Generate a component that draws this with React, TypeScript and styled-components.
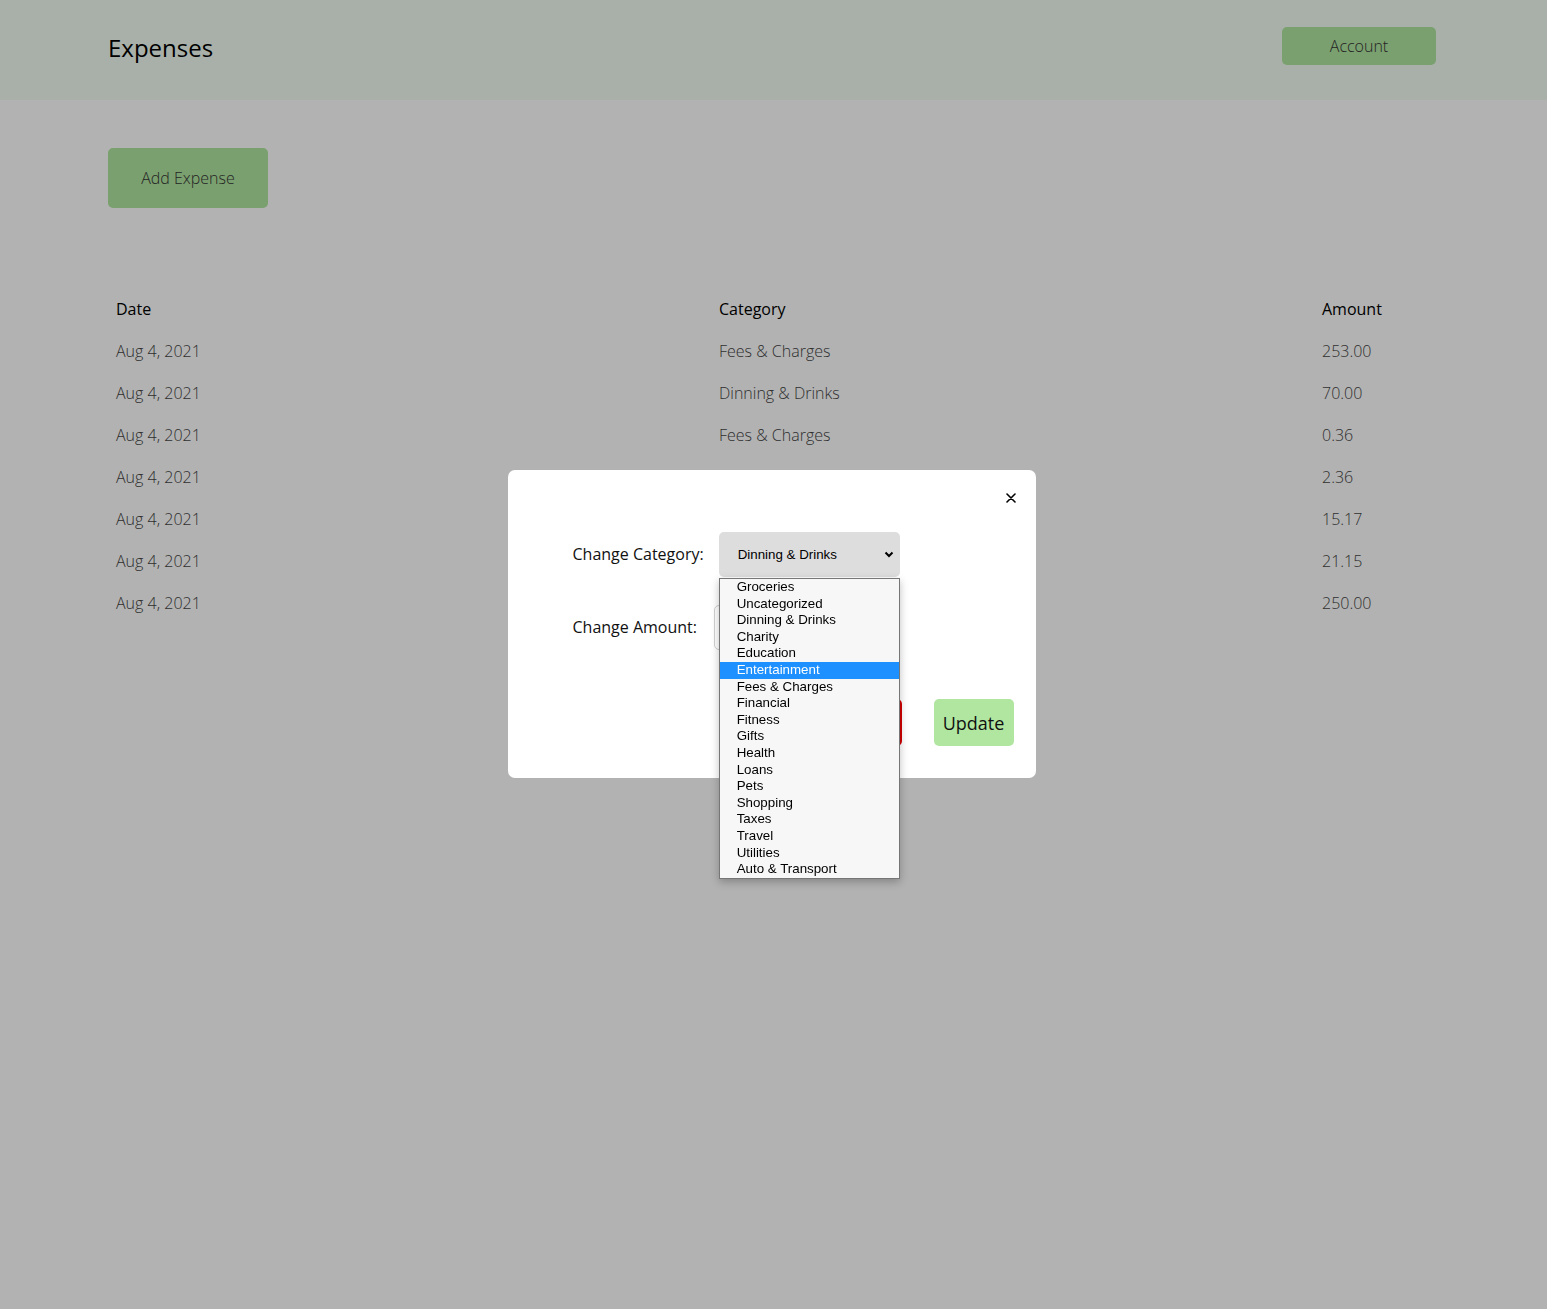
import React, { FC } from "react";
import styled, { createGlobalStyle } from "styled-components";

const GlobalStyle = createGlobalStyle`
  body {
    margin: 0;
    background: #ffffff;
    font-family: "Open Sans", "Liberation Sans", sans-serif;
    color: #111;
  }
`;

const Header = styled.header`
  display: flex;
  align-items: flex-start;
  justify-content: space-between;
  height: 100px;
  box-sizing: border-box;
  padding: 27px 111px 0 108px;
  background: #f2fdf2;
`;

const Title = styled.h1`
  margin: 0;
  font-size: 24px;
  font-weight: 400;
  line-height: 42px;
  color: #000;
`;

const GreenButton = styled.button<{ $w: number; $h: number }>`
  width: ${(p) => p.$w}px;
  height: ${(p) => p.$h}px;
  border: none;
  border-radius: 5px;
  background: #b0e6a0;
  font-family: "Open Sans", sans-serif;
  font-size: 16px;
  font-weight: 300;
  color: #333;
  cursor: pointer;
`;

const Main = styled.main`
  padding: 48px 111px 0 108px;
`;

const Table = styled.div`
  display: grid;
  grid-template-columns: 603px 603px 1fr;
  margin-top: 80px;
`;

const Cell = styled.div<{ $head?: boolean }>`
  padding-left: 8px;
  height: 42px;
  line-height: 42px;
  font-size: 16px;
  font-weight: ${(p) => (p.$head ? 400 : 300)};
  color: ${(p) => (p.$head ? "#000" : "#444")};
`;

const Overlay = styled.div`
  position: fixed;
  inset: 0;
  background: rgba(0, 0, 0, 0.3);
  display: flex;
  justify-content: center;
  align-items: flex-start;
  padding: 470px 4px 0 0;
`;

const Modal = styled.div`
  position: relative;
  width: 528px;
  height: 308px;
  box-sizing: border-box;
  padding: 62px 22px 32px 65px;
  background: #fff;
  border-radius: 7px;
  display: flex;
  flex-direction: column;
`;

const Close = styled.button`
  position: absolute;
  top: 18px;
  right: 15px;
  width: 20px;
  height: 20px;
  padding: 0;
  border: none;
  background: none;
  display: flex;
  align-items: center;
  justify-content: center;
  cursor: pointer;
`;

const FormRow = styled.div<{ $gap: number }>`
  display: flex;
  align-items: center;
  gap: ${(p) => p.$gap}px;
  margin-bottom: 28px;
`;

const Label = styled.label`
  font-size: 16px;
  line-height: 22px;
  padding-bottom: 2px;
  color: #111;
`;

const SelectWrap = styled.div`
  position: relative;
`;

const SelectBox = styled.div`
  width: 181px;
  height: 45px;
  box-sizing: border-box;
  padding: 0 6px 0 19px;
  border-radius: 5px;
  background: #dddddd;
  display: flex;
  align-items: center;
  justify-content: space-between;
  font-family: Arial, "Liberation Sans", sans-serif;
  font-size: 13.33px;
  color: #000;
`;

const Dropdown = styled.ul`
  position: absolute;
  top: 46px;
  left: 0;
  z-index: 2;
  width: 181px;
  box-sizing: border-box;
  margin: 0;
  padding: 0;
  list-style: none;
  background: #f7f7f7;
  border: 1px solid #767676;
  box-shadow: 0 3px 8px rgba(0, 0, 0, 0.25);
`;

const Option = styled.li<{ $active?: boolean }>`
  height: 16.6px;
  line-height: 16.6px;
  padding-left: 17px;
  font-family: Arial, "Liberation Sans", sans-serif;
  font-size: 13.33px;
  color: ${(p) => (p.$active ? "#fff" : "#000")};
  background: ${(p) => (p.$active ? "#1e90ff" : "transparent")};
  white-space: nowrap;
`;

const AmountInput = styled.input`
  width: 186px;
  height: 45px;
  box-sizing: border-box;
  border: 1px solid #cfcfcf;
  border-radius: 5px;
  padding: 0 12px;
  font-size: 16px;
`;

const Actions = styled.div`
  margin-top: auto;
  display: flex;
  justify-content: flex-end;
  gap: 32px;
`;

const ActionButton = styled.button<{ $danger?: boolean }>`
  width: ${(p) => (p.$danger ? 96 : 80)}px;
  height: 47px;
  padding: 0;
  border: none;
  border-radius: 5px;
  background: ${(p) => (p.$danger ? "#d40000" : "#b0e6a0")};
  color: ${(p) => (p.$danger ? "#fff" : "#111")};
  font-family: "Open Sans", sans-serif;
  font-size: 18px;
  cursor: pointer;
`;

const rows = [
  ["Aug 4, 2021", "Fees & Charges", "253.00"],
  ["Aug 4, 2021", "Dinning & Drinks", "70.00"],
  ["Aug 4, 2021", "Fees & Charges", "0.36"],
  ["Aug 4, 2021", "Shopping", "2.36"],
  ["Aug 4, 2021", "Groceries", "15.17"],
  ["Aug 4, 2021", "Gifts", "21.15"],
  ["Aug 4, 2021", "Travel", "250.00"],
];

const categories = [
  "Groceries",
  "Uncategorized",
  "Dinning & Drinks",
  "Charity",
  "Education",
  "Entertainment",
  "Fees & Charges",
  "Financial",
  "Fitness",
  "Gifts",
  "Health",
  "Loans",
  "Pets",
  "Shopping",
  "Taxes",
  "Travel",
  "Utilities",
  "Auto & Transport",
];

const App: FC = () => (
  <>
    <GlobalStyle />
    <Header>
      <Title>Expenses</Title>
      <GreenButton $w={154} $h={38}>Account</GreenButton>
    </Header>
    <Main>
      <GreenButton $w={160} $h={60}>Add Expense</GreenButton>
      <Table>
        <Cell $head>Date</Cell>
        <Cell $head>Category</Cell>
        <Cell $head>Amount</Cell>
        {rows.map((r, i) => (
          <React.Fragment key={i}>
            <Cell>{r[0]}</Cell>
            <Cell>{r[1]}</Cell>
            <Cell>{r[2]}</Cell>
          </React.Fragment>
        ))}
      </Table>
    </Main>
    <Overlay>
      <Modal>
        <Close aria-label="Close">
          <svg width="10" height="10" viewBox="0 0 10 10">
            <path d="M1 1 L9 9 M9 1 L1 9" stroke="#000" strokeWidth="1.6" strokeLinecap="round" />
          </svg>
        </Close>
        <FormRow $gap={15}>
          <Label>Change Category:</Label>
          <SelectWrap>
            <SelectBox>
              <span>Dinning &amp; Drinks</span>
              <svg width="10" height="7" viewBox="0 0 10 7">
                <path d="M1.5 1.5 L5 5 L8.5 1.5" fill="none" stroke="#000" strokeWidth="2" />
              </svg>
            </SelectBox>
            <Dropdown>
              {categories.map((c) => (
                <Option key={c} $active={c === "Entertainment"}>
                  {c}
                </Option>
              ))}
            </Dropdown>
          </SelectWrap>
        </FormRow>
        <FormRow $gap={17}>
          <Label>Change Amount:</Label>
          <AmountInput defaultValue="70.00" />
        </FormRow>
        <Actions>
          <ActionButton $danger>Delete</ActionButton>
          <ActionButton>Update</ActionButton>
        </Actions>
      </Modal>
    </Overlay>
  </>
);

export default App;
